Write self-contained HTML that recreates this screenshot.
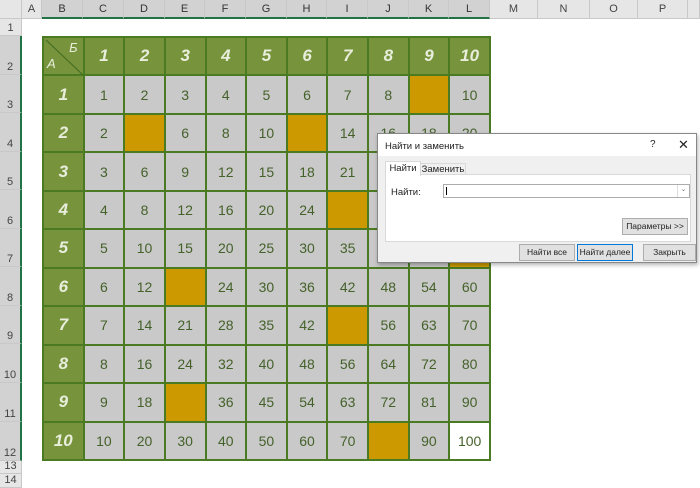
<!DOCTYPE html>
<html><head><meta charset="utf-8"><style>
body{margin:0;width:700px;height:488px;overflow:hidden;background:#fff;font-family:"Liberation Sans",sans-serif;position:relative}
.ch{position:absolute;top:0;height:19px;background:#e6e6e6;border-right:1px solid #c8c8c8;border-bottom:1px solid #c8c8c8;font-size:11px;color:#444;text-align:center;line-height:19px;box-sizing:border-box}
.ch.s{background:#d2d2d2;color:#333;border-bottom:2px solid #217346}
.rh{position:absolute;left:0;width:22px;background:#e6e6e6;border-bottom:1px solid #c8c8c8;border-right:1px solid #c8c8c8;font-size:11px;color:#444;text-align:center;box-sizing:border-box;display:flex;align-items:flex-end;justify-content:center;padding-bottom:1px}
.rh.s{background:#d2d2d2;border-right:2px solid #217346}
table{position:absolute;left:42px;top:36px;width:449px;height:425px;border-collapse:collapse;table-layout:fixed}
td{border:2px solid #4a7a22;background:#c9c9c9;color:#44612a;font-size:14px;text-align:center;padding:0;height:36px;line-height:16px}
td.h{background:#77933c;color:#e8eedb;font-weight:bold;font-style:italic;font-size:17px}
td.o{background:#cc9900}
td.w{background:#fff}
.dlg{position:absolute;left:377px;top:133px;width:320px;height:130px;background:#f0f0f0;border:1px solid #888;box-sizing:border-box;font-size:9.5px;color:#222;box-shadow:1px 2px 4px rgba(0,0,0,.3)}
.btn{position:absolute;height:15px;border:1px solid #adadad;background:#e1e1e1;font-size:8.5px;text-align:center;line-height:15px;white-space:nowrap;overflow:hidden}
</style></head><body>
<div class="ch" style="left:0;width:22px;background:#e6e6e6"></div>
<div class="ch" style="left:22px;width:20px">A</div>
<div class="ch s" style="left:42px;width:41px">B</div>
<div class="ch s" style="left:83px;width:41px">C</div>
<div class="ch s" style="left:124px;width:41px">D</div>
<div class="ch s" style="left:165px;width:40px">E</div>
<div class="ch s" style="left:205px;width:41px">F</div>
<div class="ch s" style="left:246px;width:41px">G</div>
<div class="ch s" style="left:287px;width:40px">H</div>
<div class="ch s" style="left:327px;width:41px">I</div>
<div class="ch s" style="left:368px;width:41px">J</div>
<div class="ch s" style="left:409px;width:40px">K</div>
<div class="ch s" style="left:449px;width:41px">L</div>
<div class="ch" style="left:490px;width:48px">M</div>
<div class="ch" style="left:538px;width:52px">N</div>
<div class="ch" style="left:590px;width:48px">O</div>
<div class="ch" style="left:638px;width:50px">P</div>
<div class="ch" style="left:688px;width:12px"></div>
<div class="rh" style="top:19px;height:17px">1</div>
<div class="rh s" style="top:36px;height:39px">2</div>
<div class="rh s" style="top:75px;height:38px">3</div>
<div class="rh s" style="top:113px;height:39px">4</div>
<div class="rh s" style="top:152px;height:38px">5</div>
<div class="rh s" style="top:190px;height:39px">6</div>
<div class="rh s" style="top:229px;height:38px">7</div>
<div class="rh s" style="top:267px;height:39px">8</div>
<div class="rh s" style="top:306px;height:38px">9</div>
<div class="rh s" style="top:344px;height:39px">10</div>
<div class="rh s" style="top:383px;height:39px">11</div>
<div class="rh s" style="top:422px;height:39px">12</div>
<div class="rh" style="top:461px;height:13px">13</div>
<div class="rh" style="top:474px;height:14px">14</div>
<table>
<tr><td class="h" style="position:relative"><svg width="41" height="39" style="position:absolute;left:0;top:0"><line x1="2" y1="2" x2="39" y2="37" stroke="#3f6a1e" stroke-width="1"/></svg><span style="position:absolute;right:5px;top:2px;font-size:13px;font-weight:normal">Б</span><span style="position:absolute;left:3px;bottom:2px;font-size:13px;font-weight:normal">А</span></td><td class="h">1</td><td class="h">2</td><td class="h">3</td><td class="h">4</td><td class="h">5</td><td class="h">6</td><td class="h">7</td><td class="h">8</td><td class="h">9</td><td class="h">10</td></tr>
<tr><td class="h">1</td><td>1</td><td>2</td><td>3</td><td>4</td><td>5</td><td>6</td><td>7</td><td>8</td><td class="o"></td><td>10</td></tr>
<tr><td class="h">2</td><td>2</td><td class="o"></td><td>6</td><td>8</td><td>10</td><td class="o"></td><td>14</td><td>16</td><td>18</td><td>20</td></tr>
<tr><td class="h">3</td><td>3</td><td>6</td><td>9</td><td>12</td><td>15</td><td>18</td><td>21</td><td>24</td><td>27</td><td>30</td></tr>
<tr><td class="h">4</td><td>4</td><td>8</td><td>12</td><td>16</td><td>20</td><td>24</td><td class="o"></td><td>32</td><td>36</td><td>40</td></tr>
<tr><td class="h">5</td><td>5</td><td>10</td><td>15</td><td>20</td><td>25</td><td>30</td><td>35</td><td>40</td><td>45</td><td class="o"></td></tr>
<tr><td class="h">6</td><td>6</td><td>12</td><td class="o"></td><td>24</td><td>30</td><td>36</td><td>42</td><td>48</td><td>54</td><td>60</td></tr>
<tr><td class="h">7</td><td>7</td><td>14</td><td>21</td><td>28</td><td>35</td><td>42</td><td class="o"></td><td>56</td><td>63</td><td>70</td></tr>
<tr><td class="h">8</td><td>8</td><td>16</td><td>24</td><td>32</td><td>40</td><td>48</td><td>56</td><td>64</td><td>72</td><td>80</td></tr>
<tr><td class="h">9</td><td>9</td><td>18</td><td class="o"></td><td>36</td><td>45</td><td>54</td><td>63</td><td>72</td><td>81</td><td>90</td></tr>
<tr><td class="h">10</td><td>10</td><td>20</td><td>30</td><td>40</td><td>50</td><td>60</td><td>70</td><td class="o"></td><td>90</td><td class="w">100</td></tr>
</table>
<div class="dlg">
<div style="position:absolute;left:0;top:0;width:318px;height:22px;background:#fff"></div>
<div style="position:absolute;left:7px;top:7px">Найти и заменить</div>
<div style="position:absolute;left:272px;top:5px;font-size:10px">?</div>
<div style="position:absolute;left:300px;top:3px;font-size:13px">✕</div>
<div style="position:absolute;left:7px;top:40px;width:304px;height:66px;background:#fff;border:1px solid #d9d9d9"></div>
<div style="position:absolute;left:7px;top:27px;width:34px;height:14px;background:#fff;border:1px solid #d9d9d9;border-bottom:none;text-align:center;line-height:14px">Найти</div>
<div style="position:absolute;left:42px;top:29px;width:44px;height:11px;border:1px solid #d9d9d9;border-bottom:none;text-align:center;line-height:11px;white-space:nowrap">Заменить</div>
<div style="position:absolute;left:13px;top:53px">Найти:</div>
<div style="position:absolute;left:65px;top:50px;width:245px;height:12px;background:#fff;border:1px solid #acacac"><div style="position:absolute;left:2px;top:2px;width:1px;height:8px;background:#000"></div><div style="position:absolute;right:0;top:0;width:11px;height:12px;border-left:1px solid #ddd;font-size:7px;text-align:center;color:#777">⌄</div></div>
<div class="btn" style="left:244px;top:84px;width:64px">Параметры &gt;&gt;</div>
<div class="btn" style="left:141px;top:110px;width:54px">Найти все</div>
<div class="btn" style="left:199px;top:110px;width:54px;border:1px solid #0078d7">Найти далее</div>
<div class="btn" style="left:265px;top:110px;width:51px">Закрыть</div>
</div>
</body></html>
